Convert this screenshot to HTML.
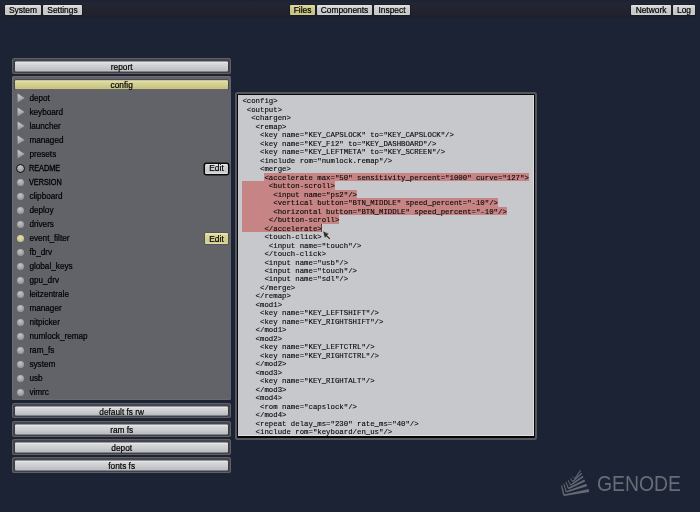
<!DOCTYPE html>
<html><head><meta charset="utf-8">
<style>
*{margin:0;padding:0;box-sizing:border-box}
html,body{width:700px;height:512px;overflow:hidden;background:#1c2334;font-family:"Liberation Sans",sans-serif}
body{will-change:transform}
.abs{position:absolute}
#topbar{left:2px;top:2px;width:696px;height:16px;background:linear-gradient(#242731,#1e212b);border-radius:2px}
.tb{position:absolute;top:5px;height:10px;font-size:8.4px!important;background:linear-gradient(#e2e3e4,#cdcecf 30%,#c3c4c5 80%,#d2d3d4);border-radius:1px;font-size:8px;line-height:10px;text-align:center;color:#000;-webkit-text-stroke:0.2px #000;box-shadow:0 0 0 0.5px #15161a}
.tb.sel{background:linear-gradient(#e2dea2,#d0cc8e 30%,#c6c282 80%,#d0cc92)}
.frame{position:absolute;left:12.3px;width:218.6px;background:#45464b;border-radius:2.5px;box-shadow:inset 0 0 0 1px #606166}
.btn{position:absolute;left:3.2px;right:3px;top:3px;height:9.8px;transform:translateY(0.6px);background:linear-gradient(#eef0f1,#d6d7d9 20%,#cbcccf 55%,#bdbec1 85%,#c6c7c9);border-radius:1px;font-size:8.3px;line-height:10.6px;text-align:center;color:#000;-webkit-text-stroke:0.2px #000;box-shadow:0 0 0 0.6px #34353a}
.btn.sel{transform:translateY(1.2px);height:9.2px;line-height:11px;background:linear-gradient(#eeeab4,#dcd89e 20%,#d2ce90 55%,#c6c284 85%,#ccc88a)}
#cfg{top:76.3px;height:324.2px;background:#626369;box-shadow:inset 1px 1px 0 #6c6d72,inset 0 -1px 0 #6a6b70;border-radius:2px}
.item{position:absolute;left:29.4px;font-size:8.2px;color:#000;-webkit-text-stroke:0.2px #000;height:10px;line-height:10px}
.tri{position:absolute;left:17px;width:0;height:0;border-top:4.3px solid transparent;border-bottom:4.3px solid transparent;border-left:7px solid #b4b4b6}
.dot{position:absolute;left:16.9px;width:7px;height:7px;border-radius:50%;background:radial-gradient(circle at 45% 30%,#c4c4c6 0%,#a8a8ab 45%,#88888c 100%)}
.edit{position:absolute;left:205px;width:23px;height:10px;font-size:8.4px;line-height:9.6px;text-align:center;color:#000;-webkit-text-stroke:0.2px #000;background:linear-gradient(#eceeef,#d2d3d5 20%,#c7c8ca 75%,#dfe0e1);border-radius:1px}
#ed{left:235px;top:92px;width:302px;height:347.5px;background:#55575c;border-radius:2.5px}
#edb{position:absolute;left:1.8px;top:1.8px;right:1.8px;bottom:1.8px;background:#050505;border-radius:1px}
#edi{position:absolute;left:1.2px;top:1.2px;right:1.5px;bottom:1.5px;background:#c6c8cb;overflow:hidden;box-shadow:inset -1px -1px 0 #dcdee0}
#code{position:absolute;left:0;top:0;font-family:"Liberation Mono",monospace;font-size:7.35px;color:#080808;-webkit-text-stroke:0.12px #080808;white-space:pre}
#caret{left:321.3px;top:223.5px;width:0.8px;height:8.3px;background:#4a2a2a;opacity:0.8}
.ln{position:absolute;left:242.4px;height:8.5px;line-height:8.5px;transform:translateY(0.5px)}
.ring{width:9px;height:9px;left:15.9px;border:1.2px solid #111;background:radial-gradient(circle at 45% 30%,#c4c4c6 0%,#a8a8ab 45%,#88888c 100%)}
.ysel{background:radial-gradient(circle at 45% 35%,#e4e0a8,#bcb87e)}
.ring2{box-shadow:0 0 0 1.5px #0a0a0a;border-radius:1.5px}
.ysel2{background:linear-gradient(#eeeab4,#dad69c 20%,#cfcb8c 75%,#e0dca4);box-shadow:0 0 0 0.6px #45464a}
.hl{position:absolute;background:#c68484}
#gen{left:596.8px;top:470px;font-size:22.5px;line-height:27px;color:#676c76;transform-origin:0 0;transform:scaleX(0.862);letter-spacing:0}
</style></head><body>
<div id="topbar" class="abs"></div>
<div class="tb" style="left:5px;width:36px">System</div>
<div class="tb" style="left:43px;width:39px">Settings</div>
<div class="tb sel" style="left:290px;width:25px">Files</div>
<div class="tb" style="left:317px;width:55px">Components</div>
<div class="tb" style="left:374px;width:36px">Inspect</div>
<div class="tb" style="left:631px;width:40px">Network</div>
<div class="tb" style="left:673px;width:22px">Log</div>

<div class="frame" style="top:58.3px;height:16px"><div class="btn">report</div></div>
<div class="frame" id="cfg"><div id="cfgin"></div><div class="btn sel">config</div></div>

<div class="frame" style="top:402.7px;height:15.8px"><div class="btn">default fs rw</div></div>
<div class="frame" style="top:420.8px;height:15.8px"><div class="btn">ram fs</div></div>
<div class="frame" style="top:438.9px;height:15.8px"><div class="btn">depot</div></div>
<div class="frame" style="top:457px;height:15.8px"><div class="btn">fonts fs</div></div>

<div id="ed" class="abs"><div id="edb"><div id="edi"></div></div></div>
<svg width="0" height="0" style="position:absolute"><defs><linearGradient id="tg" x1="0" y1="0" x2="0.3" y2="1"><stop offset="0" stop-color="#cfcfd1"/><stop offset="0.5" stop-color="#b4b4b6"/><stop offset="1" stop-color="#8e8e92"/></linearGradient></defs></svg>
<svg class="abs" style="left:16.5px;top:93.30px" width="9" height="10" viewBox="0 0 9 10"><polygon points="0.6,0.6 7.6,5 0.6,9.4" fill="url(#tg)"/></svg>
<div class="item" style="top:94.10px">depot</div>
<svg class="abs" style="left:16.5px;top:107.30px" width="9" height="10" viewBox="0 0 9 10"><polygon points="0.6,0.6 7.6,5 0.6,9.4" fill="url(#tg)"/></svg>
<div class="item" style="top:108.10px">keyboard</div>
<svg class="abs" style="left:16.5px;top:121.30px" width="9" height="10" viewBox="0 0 9 10"><polygon points="0.6,0.6 7.6,5 0.6,9.4" fill="url(#tg)"/></svg>
<div class="item" style="top:122.10px">launcher</div>
<svg class="abs" style="left:16.5px;top:135.30px" width="9" height="10" viewBox="0 0 9 10"><polygon points="0.6,0.6 7.6,5 0.6,9.4" fill="url(#tg)"/></svg>
<div class="item" style="top:136.10px">managed</div>
<svg class="abs" style="left:16.5px;top:149.30px" width="9" height="10" viewBox="0 0 9 10"><polygon points="0.6,0.6 7.6,5 0.6,9.4" fill="url(#tg)"/></svg>
<div class="item" style="top:150.10px">presets</div>
<div class="dot ring" style="top:163.80px"></div>
<div class="item" style="top:164.10px;transform-origin:0 0;transform:scaleX(0.89);-webkit-text-stroke:0.3px #000">README</div>
<div class="dot" style="top:178.80px"></div>
<div class="item" style="top:178.10px;transform-origin:0 0;transform:scaleX(0.89);-webkit-text-stroke:0.3px #000">VERSION</div>
<div class="dot" style="top:192.80px"></div>
<div class="item" style="top:192.10px">clipboard</div>
<div class="dot" style="top:206.80px"></div>
<div class="item" style="top:206.10px">deploy</div>
<div class="dot" style="top:220.80px"></div>
<div class="item" style="top:220.10px">drivers</div>
<div class="dot ysel" style="top:234.80px"></div>
<div class="item" style="top:234.10px">event_filter</div>
<div class="dot" style="top:248.80px"></div>
<div class="item" style="top:248.10px">fb_drv</div>
<div class="dot" style="top:262.80px"></div>
<div class="item" style="top:262.10px">global_keys</div>
<div class="dot" style="top:276.80px"></div>
<div class="item" style="top:276.10px">gpu_drv</div>
<div class="dot" style="top:290.80px"></div>
<div class="item" style="top:290.10px">leitzentrale</div>
<div class="dot" style="top:304.80px"></div>
<div class="item" style="top:304.10px">manager</div>
<div class="dot" style="top:318.80px"></div>
<div class="item" style="top:318.10px">nitpicker</div>
<div class="dot" style="top:332.80px"></div>
<div class="item" style="top:332.10px">numlock_remap</div>
<div class="dot" style="top:346.80px"></div>
<div class="item" style="top:346.10px">ram_fs</div>
<div class="dot" style="top:360.80px"></div>
<div class="item" style="top:360.10px">system</div>
<div class="dot" style="top:374.80px"></div>
<div class="item" style="top:374.10px">usb</div>
<div class="dot" style="top:388.80px"></div>
<div class="item" style="top:388.10px">vimrc</div>
<div class="edit ring2" style="top:163.5px">Edit</div>
<div class="edit ysel2" style="top:233px;height:11px;line-height:11px"><span style="position:relative;top:0.6px">Edit</span></div>
<div class="hl" style="left:264.44px;top:172.66px;width:264.48px;height:8.48px"></div>
<div class="hl" style="left:242.40px;top:181.15px;width:92.57px;height:8.48px"></div>
<div class="hl" style="left:242.40px;top:189.63px;width:114.61px;height:8.48px"></div>
<div class="hl" style="left:242.40px;top:198.12px;width:255.66px;height:8.48px"></div>
<div class="hl" style="left:242.40px;top:206.60px;width:264.48px;height:8.48px"></div>
<div class="hl" style="left:242.40px;top:215.09px;width:96.98px;height:8.48px"></div>
<div class="hl" style="left:242.40px;top:223.57px;width:79.34px;height:8.48px"></div>
<div id="code"><div class="ln" style="top:96.30px">&lt;config&gt;</div><div class="ln" style="top:104.78px"> &lt;output&gt;</div><div class="ln" style="top:113.27px">  &lt;chargen&gt;</div><div class="ln" style="top:121.75px">   &lt;remap&gt;</div><div class="ln" style="top:130.24px">    &lt;key name=&quot;KEY_CAPSLOCK&quot; to=&quot;KEY_CAPSLOCK&quot;/&gt;</div><div class="ln" style="top:138.72px">    &lt;key name=&quot;KEY_F12&quot; to=&quot;KEY_DASHBOARD&quot;/&gt;</div><div class="ln" style="top:147.21px">    &lt;key name=&quot;KEY_LEFTMETA&quot; to=&quot;KEY_SCREEN&quot;/&gt;</div><div class="ln" style="top:155.69px">    &lt;include rom=&quot;numlock.remap&quot;/&gt;</div><div class="ln" style="top:164.18px">    &lt;merge&gt;</div><div class="ln" style="top:172.66px">     &lt;accelerate max=&quot;50&quot; sensitivity_percent=&quot;1000&quot; curve=&quot;127&quot;&gt;</div><div class="ln" style="top:181.15px">      &lt;button-scroll&gt;</div><div class="ln" style="top:189.63px">       &lt;input name=&quot;ps2&quot;/&gt;</div><div class="ln" style="top:198.12px">       &lt;vertical button=&quot;BTN_MIDDLE&quot; speed_percent=&quot;-10&quot;/&gt;</div><div class="ln" style="top:206.60px">       &lt;horizontal button=&quot;BTN_MIDDLE&quot; speed_percent=&quot;-10&quot;/&gt;</div><div class="ln" style="top:215.09px">      &lt;/button-scroll&gt;</div><div class="ln" style="top:223.57px">     &lt;/accelerate&gt;</div><div class="ln" style="top:232.06px">     &lt;touch-click&gt;</div><div class="ln" style="top:240.55px">      &lt;input name=&quot;touch&quot;/&gt;</div><div class="ln" style="top:249.03px">     &lt;/touch-click&gt;</div><div class="ln" style="top:257.51px">     &lt;input name=&quot;usb&quot;/&gt;</div><div class="ln" style="top:266.00px">     &lt;input name=&quot;touch&quot;/&gt;</div><div class="ln" style="top:274.49px">     &lt;input name=&quot;sdl&quot;/&gt;</div><div class="ln" style="top:282.97px">    &lt;/merge&gt;</div><div class="ln" style="top:291.45px">   &lt;/remap&gt;</div><div class="ln" style="top:299.94px">   &lt;mod1&gt;</div><div class="ln" style="top:308.43px">    &lt;key name=&quot;KEY_LEFTSHIFT&quot;/&gt;</div><div class="ln" style="top:316.91px">    &lt;key name=&quot;KEY_RIGHTSHIFT&quot;/&gt;</div><div class="ln" style="top:325.39px">   &lt;/mod1&gt;</div><div class="ln" style="top:333.88px">   &lt;mod2&gt;</div><div class="ln" style="top:342.37px">    &lt;key name=&quot;KEY_LEFTCTRL&quot;/&gt;</div><div class="ln" style="top:350.85px">    &lt;key name=&quot;KEY_RIGHTCTRL&quot;/&gt;</div><div class="ln" style="top:359.33px">   &lt;/mod2&gt;</div><div class="ln" style="top:367.82px">   &lt;mod3&gt;</div><div class="ln" style="top:376.31px">    &lt;key name=&quot;KEY_RIGHTALT&quot;/&gt;</div><div class="ln" style="top:384.79px">   &lt;/mod3&gt;</div><div class="ln" style="top:393.27px">   &lt;mod4&gt;</div><div class="ln" style="top:401.76px">    &lt;rom name=&quot;capslock&quot;/&gt;</div><div class="ln" style="top:410.25px">   &lt;/mod4&gt;</div><div class="ln" style="top:418.73px">   &lt;repeat delay_ms=&quot;230&quot; rate_ms=&quot;40&quot;/&gt;</div><div class="ln" style="top:427.21px">   &lt;include rom=&quot;keyboard/en_us&quot;/&gt;</div></div>
<svg class="abs" style="left:558px;top:466px" width="36" height="34" viewBox="0 0 36 34"><g fill="#646973"><polygon points="3.00,19.63 5.24,29.39 6.76,29.01 4.00,19.37"/><polygon points="6.15,29.99 31.28,25.97 30.72,23.03 5.85,28.41"/><polygon points="5.28,17.83 7.57,26.09 8.83,25.71 6.12,17.57"/><polygon points="8.44,26.61 29.10,20.18 28.30,17.82 7.96,25.19"/><polygon points="7.53,16.04 9.84,22.71 10.96,22.29 8.27,15.76"/><polygon points="10.71,23.13 27.26,15.44 26.34,13.56 10.09,21.87"/><polygon points="9.77,14.25 12.01,19.43 12.99,18.97 10.43,13.95"/><polygon points="12.87,19.73 25.58,11.20 24.62,9.80 12.13,18.67"/><polygon points="12.04,12.48 14.30,16.07 15.10,15.53 12.56,12.12"/><polygon points="15.11,16.23 24.15,7.67 23.25,6.73 14.29,15.37"/><polygon points="14.23,10.82 16.65,12.83 17.15,12.17 14.57,10.38"/><polygon points="17.35,12.81 22.91,4.68 22.09,4.12 16.45,12.19"/></g></svg>
<div id="caret" class="abs"></div>
<svg class="abs" style="left:320px;top:229px" width="14" height="14" viewBox="320 229 14 14"><path d="M323.2 231.6 L324.9 237.8 L326.3 236.2 L329.3 239.2 L330.3 238.2 L327.3 235.2 L329.2 233.6 Z" fill="#2a2a2a"/><path d="M325 232.6 L329.2 233.6 L327.3 235.2 L330.3 238.2" fill="none" stroke="#e6e6e6" stroke-width="0.5"/></svg>
<div id="gen" class="abs">GENODE</div>
</body></html>
